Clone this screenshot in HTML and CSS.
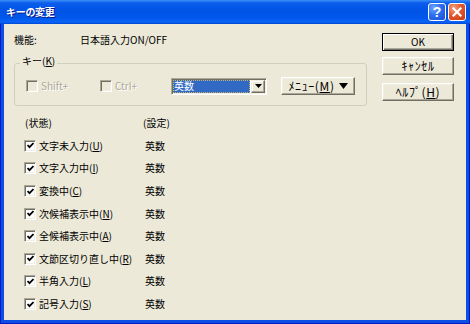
FILE: index.html
```html
<!DOCTYPE html>
<html lang="ja">
<head>
<meta charset="utf-8">
<title>キーの変更</title>
<link rel="stylesheet" href="styles.css">
</head>
<body>
<div class="win">
  <div class="titlebar">
    <span class="title">キーの変更</span>
    <div class="tb-btns">
      <span class="tb-btn tb-help">?</span>
      <span class="tb-btn tb-close"><svg width="10" height="10" viewBox="0 0 10 10"><path d="M1.5 1.5 L8.5 8.5 M8.5 1.5 L1.5 8.5" stroke="#fff" stroke-width="2.2" stroke-linecap="square"/></svg></span>
    </div>
  </div>
  <div class="client">
    <div class="main">
      <div class="func"><span class="func-label">機能:</span><span>日本語入力ON/OFF</span></div>
      <div class="group">
        <span class="group-label">キー(<u>K</u>)</span>
        <div class="group-row">
          <span class="chk chk-shift disabled"><span class="box"></span>Shift+</span>
          <span class="chk chk-ctrl disabled"><span class="box"></span>Ctrl+</span>
          <span class="combo"><span class="combo-sel">英数</span><span class="combo-btn"><svg width="7" height="4" viewBox="0 0 7 4"><path d="M0 0H7L3.5 4Z" fill="#000"/></svg></span></span>
          <span class="btn btn-menu"><span class="kana">ﾒﾆｭｰ(<u>M</u>)</span><svg class="tri" width="9" height="6" viewBox="0 0 9 6"><path d="M0 0H9L4.5 6Z" fill="#000"/></svg></span>
        </div>
      </div>
      <div class="list">
        <div class="row head"><span class="h1">(状態)</span><span class="h2">(設定)</span></div>
        <div class="row"><span class="chk"><span class="box on"><svg width="7" height="7" viewBox="0 0 7 7"><path d="M0.5 3 L2.5 5.2 L6.5 1" fill="none" stroke="#000" stroke-width="1.8"/></svg></span>文字未入力(<u>U</u>)</span><span>英数</span></div>
        <div class="row"><span class="chk"><span class="box on"><svg width="7" height="7" viewBox="0 0 7 7"><path d="M0.5 3 L2.5 5.2 L6.5 1" fill="none" stroke="#000" stroke-width="1.8"/></svg></span>文字入力中(<u>I</u>)</span><span>英数</span></div>
        <div class="row"><span class="chk"><span class="box on"><svg width="7" height="7" viewBox="0 0 7 7"><path d="M0.5 3 L2.5 5.2 L6.5 1" fill="none" stroke="#000" stroke-width="1.8"/></svg></span>変換中(<u>C</u>)</span><span>英数</span></div>
        <div class="row"><span class="chk"><span class="box on"><svg width="7" height="7" viewBox="0 0 7 7"><path d="M0.5 3 L2.5 5.2 L6.5 1" fill="none" stroke="#000" stroke-width="1.8"/></svg></span>次候補表示中(<u>N</u>)</span><span>英数</span></div>
        <div class="row"><span class="chk"><span class="box on"><svg width="7" height="7" viewBox="0 0 7 7"><path d="M0.5 3 L2.5 5.2 L6.5 1" fill="none" stroke="#000" stroke-width="1.8"/></svg></span>全候補表示中(<u>A</u>)</span><span>英数</span></div>
        <div class="row"><span class="chk"><span class="box on"><svg width="7" height="7" viewBox="0 0 7 7"><path d="M0.5 3 L2.5 5.2 L6.5 1" fill="none" stroke="#000" stroke-width="1.8"/></svg></span>文節区切り直し中(<u>R</u>)</span><span>英数</span></div>
        <div class="row"><span class="chk"><span class="box on"><svg width="7" height="7" viewBox="0 0 7 7"><path d="M0.5 3 L2.5 5.2 L6.5 1" fill="none" stroke="#000" stroke-width="1.8"/></svg></span>半角入力(<u>L</u>)</span><span>英数</span></div>
        <div class="row"><span class="chk"><span class="box on"><svg width="7" height="7" viewBox="0 0 7 7"><path d="M0.5 3 L2.5 5.2 L6.5 1" fill="none" stroke="#000" stroke-width="1.8"/></svg></span>記号入力(<u>S</u>)</span><span>英数</span></div>
      </div>
    </div>
    <div class="side">
      <span class="btn btn-default">OK</span>
      <span class="btn btn-cancel"><span class="kana">ｷｬﾝｾﾙ</span></span>
      <span class="btn btn-help"><span class="kana">ﾍﾙﾌﾟ(<u>H</u>)</span></span>
    </div>
  </div>
</div>
</body>
</html>
```

FILE: styles.css
```css
* { box-sizing: border-box; margin: 0; padding: 0; }
html, body { width: 470px; height: 324px; overflow: hidden; }
body {
  font-family: "Noto Sans CJK JP", "Noto Sans", sans-serif;
  font-size: 10px;
  line-height: 12px;
  color: #000;
  background: #0A46DA;
}
.win {
  width: 470px;
  height: 324px;
  display: flex;
  flex-direction: column;
  background: #0B4EE0;
  box-shadow: inset 1px 0 #0019CF, inset -1px 0 #0019CF, inset 0 -1px #0019CF;
}
.titlebar {
  height: 24px;
  flex: none;
  display: flex;
  align-items: center;
  justify-content: space-between;
  padding: 0 4px 0 6px;
  background: linear-gradient(#3D8FF7 0, #0C5DEC 3px, #0054E5 10px, #0057EC 18px, #0965F5 22px, #0045D2 24px);
}
.title {
  color: #fff;
  font-weight: bold;
  font-size: 10px;
  letter-spacing: -0.3px;
  text-shadow: 1px 1px #0A1883;
}
.tb-btns { display: flex; gap: 2px; }
.tb-btn {
  width: 18px;
  height: 18px;
  border: 1px solid #fff;
  border-radius: 3px;
  display: flex;
  align-items: center;
  justify-content: center;
  color: #fff;
  font-family: "Liberation Sans", sans-serif;
  font-weight: bold;
  font-size: 14px;
  line-height: 14px;
}
.tb-help {
  background: radial-gradient(circle at 30% 25%, #6FA5FF 0, #2C6EF0 45%, #1850DA 100%);
}
.tb-close {
  background: radial-gradient(circle at 30% 25%, #F3A27F 0, #E3582F 45%, #C63A13 100%);
}
.client {
  flex: 1;
  margin: 0 4px 4px;
  background: #ECE9D8;
  display: flex;
  gap: 15px;
  padding: 9px 12px 0 10px;
}
.main { width: 353px; flex: none; }
.func { display: flex; height: 12px; margin-top: 1px; }
.func-label { width: 66px; }
.group {
  position: relative;
  margin-top: 17px;
  height: 43px;
  border: 1px solid #D0D0BF;
  border-radius: 3px;
  padding: 13px 0 0 11px;
}
.group-label {
  position: absolute;
  top: -9px;
  left: 5px;
  padding: 0 2px;
  background: #ECE9D8;
}
.group-row { display: flex; align-items: center; height: 18px; }
.chk { display: flex; align-items: center; }
.box {
  width: 12px;
  height: 12px;
  flex: none;
  margin-right: 3px;
  background: #fff;
  border: 1px solid;
  border-color: #ACA899 #fff #fff #ACA899;
  box-shadow: inset 1px 1px #716F64, inset -1px -1px #F1EFE2;
  display: flex;
  align-items: center;
  justify-content: center;
}
.disabled { color: #ACA899; text-shadow: 1px 1px #fff; }
.disabled .box { background: #ECE9D8; }
.chk-shift { width: 74px; }
.chk-ctrl { width: 71px; }
.combo {
  width: 96px;
  height: 17px;
  display: flex;
  padding: 1px;
  margin-right: 14px;
  background: #fff;
  border: 1px solid;
  border-color: #ACA899 #fff #fff #ACA899;
  box-shadow: inset 1px 1px #716F64, inset -1px -1px #F1EFE2;
}
.combo-sel {
  width: 78px;
  height: 13px;
  background: #316AC5;
  color: #fff;
  padding-left: 1px;
  line-height: 12px;
  outline: 1px dotted #C8B46A;
  outline-offset: -1px;
}
.combo-btn {
  width: 14px;
  height: 13px;
  margin-left: 1px;
  background: #ECE9D8;
  border: 1px solid;
  border-color: #F1EFE2 #716F64 #716F64 #F1EFE2;
  box-shadow: inset -1px -1px #ACA899, inset 1px 1px #fff;
  display: flex;
  align-items: center;
  justify-content: center;
}
.btn {
  display: flex;
  align-items: center;
  justify-content: center;
  height: 18px;
  background: #ECE9D8;
  border: 1px solid;
  border-color: #fff #716F64 #716F64 #fff;
  box-shadow: inset -1px -1px #ACA899, inset 1px 1px #F1EFE2;
}
.kana { font-size: 12px; letter-spacing: 0.6px; line-height: 12px; }
.btn-menu { width: 74px; gap: 4px; }
.tri { flex: none; }
.side { width: 72px; flex: none; display: flex; flex-direction: column; }
.btn-default {
  border: 1px solid #000;
  box-shadow: inset 1px 1px #fff, inset -1px -1px #716F64, inset -2px -2px #ACA899;
}
.btn-cancel { margin-top: 6px; }
.btn-help { margin-top: 8px; }
.list { margin-top: 6px; padding-left: 10px; }
.row {
  display: grid;
  grid-template-columns: 121px auto;
  height: 22.6px;
  align-items: center;
}
.h1 { padding-left: 1px; }
.h2 { margin-left: -2px; }
```
